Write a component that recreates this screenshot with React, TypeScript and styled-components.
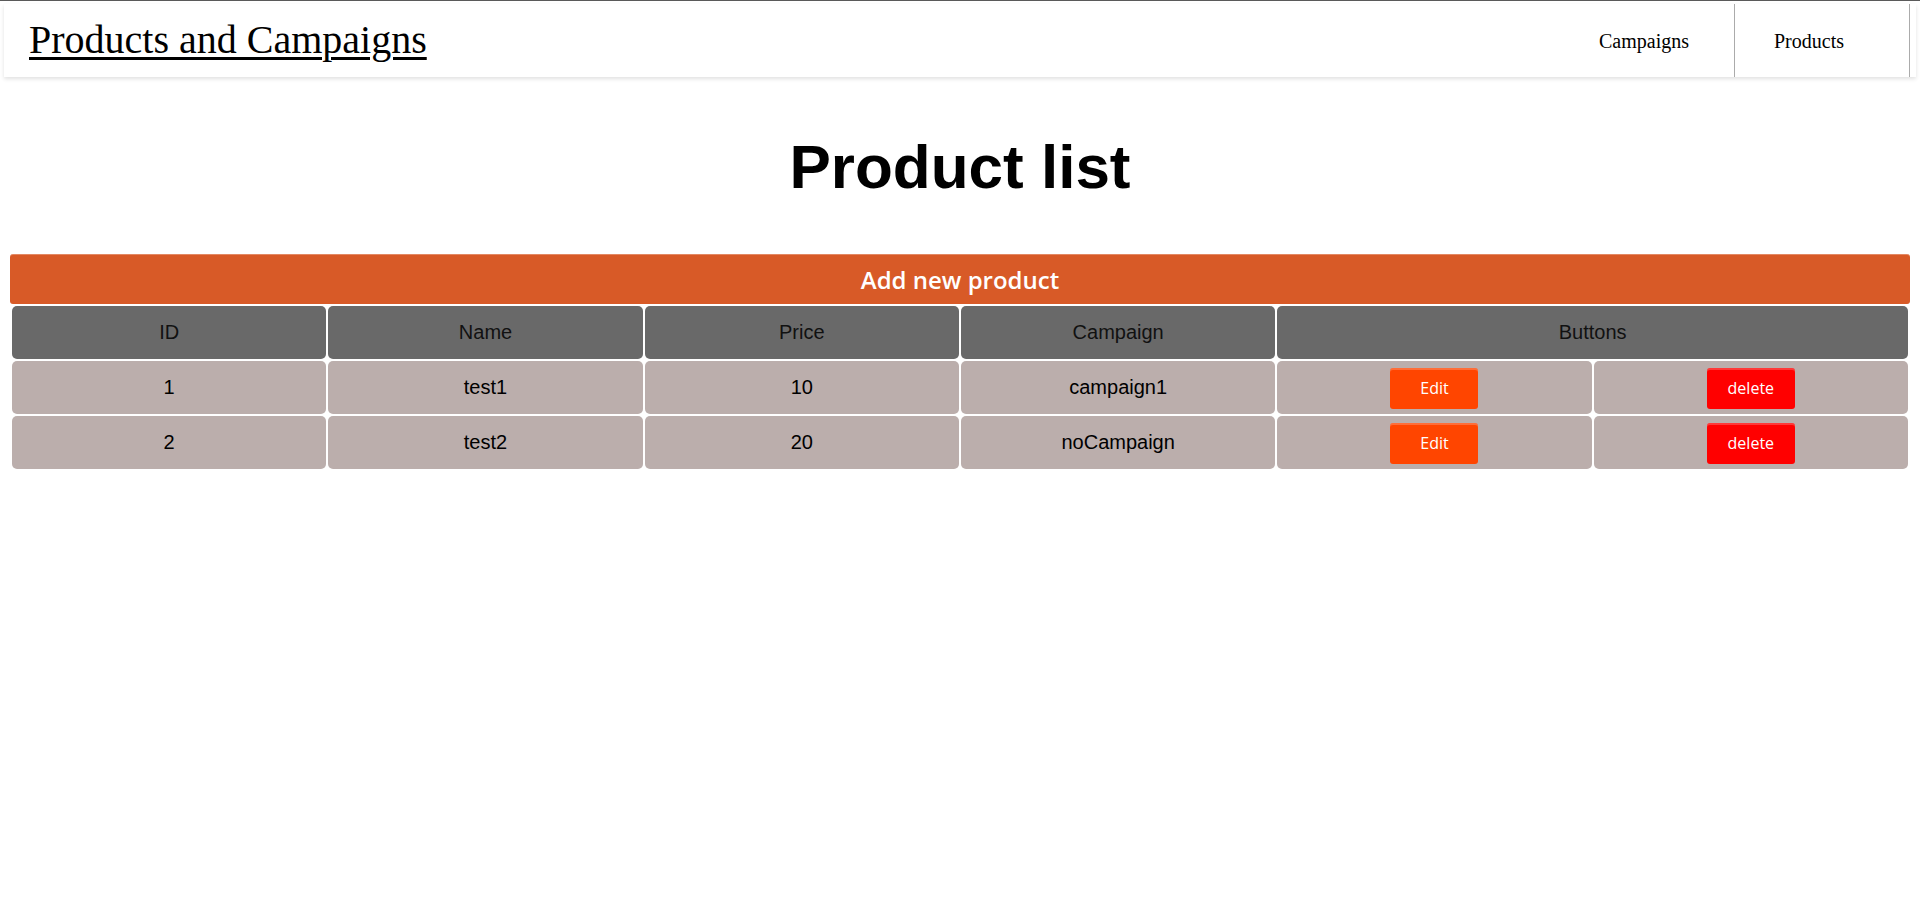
import React from "react";
import styled, { createGlobalStyle } from "styled-components";

const GlobalStyle = createGlobalStyle`
  html, body { margin: 0; padding: 0; background: #ffffff; }
  body { border-top: 1px solid #5a5a5a; font-family: "Liberation Serif", "Times New Roman", serif; }
  * { box-sizing: border-box; }
`;

const NavBar = styled.nav`
  margin: 3px 4px 0;
  height: 73px;
  display: flex;
  align-items: stretch;
  justify-content: space-between;
  background: #fff;
  box-shadow: 0 2px 4px rgba(0, 0, 0, 0.12);
  padding-left: 25px;
`;

const Brand = styled.a`
  align-self: center;
  font-family: "Liberation Serif", "Times New Roman", serif;
  font-size: 40px;
  color: #000;
  text-decoration: underline;
  text-underline-offset: 4px;
  text-decoration-thickness: 3px;
  cursor: pointer;
  margin-top: -2px;
`;

const NavList = styled.ul`
  list-style: none;
  margin: 0 6px 0 0;
  padding: 0;
  display: flex;
  align-items: stretch;
`;

const NavItem = styled.li`
  width: 175px;
  border-right: 1px solid #ababab;
  display: flex;
  align-items: center;
  padding-left: 39px;
  font-family: "Liberation Serif", "Times New Roman", serif;
  font-size: 20px;
  color: #000;
  cursor: pointer;
  padding-top: 1px;
`;

const Title = styled.h1`
  margin: 53px 0 50px;
  text-align: center;
  font-family: "Liberation Sans", Arial, sans-serif;
  font-weight: 700;
  font-size: 62px;
  line-height: 74px;
  color: #000;
`;

const Wrapper = styled.section`
  margin: 0 10px;
`;

const AddButton = styled.button`
  display: block;
  width: 100%;
  height: 50px;
  border: none;
  border-radius: 3px;
  background: #d85a27;
  box-shadow: inset 0 1px 0 rgba(255, 255, 255, 0.28);
  color: #fff;
  font-family: "Open Sans", "Noto Sans", sans-serif;
  font-weight: 600;
  font-size: 24px;
  cursor: pointer;
`;

const Grid = styled.div`
  display: grid;
  grid-template-columns: repeat(6, 1fr);
  grid-auto-rows: 53px;
  gap: 2px;
  padding: 2px;
`;

const Cell = styled.div<{ $head?: boolean; $span?: number }>`
  grid-column: span ${(p) => p.$span ?? 1};
  background: ${(p) => (p.$head ? "#696969" : "#bbaeac")};
  border-radius: 5px;
  display: flex;
  align-items: center;
  justify-content: center;
  font-family: "Liberation Sans", Arial, sans-serif;
  font-size: 20px;
  color: ${(p) => (p.$head ? "#111" : "#000")};
`;

const ActionButton = styled.button<{ $danger?: boolean }>`
  width: 88px;
  height: 41px;
  border: none;
  border-radius: 3px;
  background: ${(p) => (p.$danger ? "#ff0000" : "#ff4500")};
  box-shadow: inset 0 2px 0 rgba(255, 255, 255, 0.22);
  color: #fff;
  font-family: "Open Sans", "Noto Sans", sans-serif;
  font-size: 16px;
  cursor: pointer;
  margin-top: 1px;
`;

const products = [
  { id: 1, name: "test1", price: 10, campaign: "campaign1" },
  { id: 2, name: "test2", price: 20, campaign: "noCampaign" },
];

export default function App() {
  return (
    <>
      <GlobalStyle />
      <NavBar>
        <Brand>Products and Campaigns</Brand>
        <NavList>
          <NavItem>Campaigns</NavItem>
          <NavItem>Products</NavItem>
        </NavList>
      </NavBar>
      <Title>Product list</Title>
      <Wrapper>
        <AddButton>Add new product</AddButton>
        <Grid>
          <Cell $head>ID</Cell>
          <Cell $head>Name</Cell>
          <Cell $head>Price</Cell>
          <Cell $head>Campaign</Cell>
          <Cell $head $span={2}>Buttons</Cell>
          {products.map((p) => (
            <React.Fragment key={p.id}>
              <Cell>{p.id}</Cell>
              <Cell>{p.name}</Cell>
              <Cell>{p.price}</Cell>
              <Cell>{p.campaign}</Cell>
              <Cell>
                <ActionButton>Edit</ActionButton>
              </Cell>
              <Cell>
                <ActionButton $danger>delete</ActionButton>
              </Cell>
            </React.Fragment>
          ))}
        </Grid>
      </Wrapper>
    </>
  );
}
